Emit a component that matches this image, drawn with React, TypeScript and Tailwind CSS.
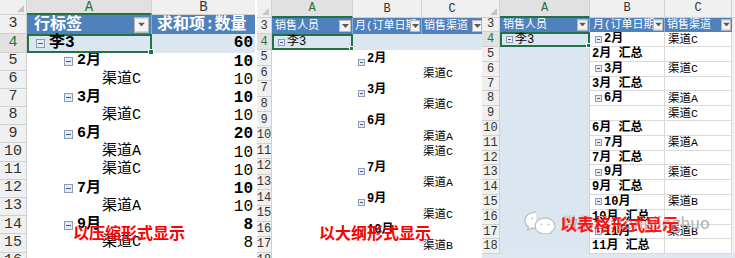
import React from "react";

const FONT = "font-['Liberation_Mono','Noto_Sans_CJK_SC',monospace]";

function Tog({ small }: { small?: boolean }) {
  if (small)
    return (
      <span className="inline-flex items-center justify-center w-[7px] h-[7px] border border-[#8c9cb8] bg-[#e6ecf5] mr-[2px] shrink-0">
        <span className="w-[3px] h-px bg-[#4a5a78]" />
      </span>
    );
  return (
    <span className="inline-flex items-center justify-center w-[9px] h-[9px] border border-[#8c9cb8] bg-[#e6ecf5] mr-[4px] shrink-0">
      <span className="w-[5px] h-px bg-[#4a5a78]" />
    </span>
  );
}

function Corner({ w, h }: { w: string; h: string }) {
  return (
    <div className={`${w} ${h} bg-[#f0f0f0] border-r border-b border-[#d0d0d0] flex items-end justify-end pr-[2px] pb-[2px] shrink-0`}>
      <svg width="7" height="7" viewBox="0 0 7 7">
        <polygon points="7,0 7,7 0,7" fill="#c4c4c4" />
      </svg>
    </div>
  );
}

function Drop({ cls }: { cls: string }) {
  return (
    <span className={`absolute top-1/2 -translate-y-1/2 ${cls} bg-[#f4f4f4] border border-[#b9b9b9] flex items-center justify-center`}>
      <svg width="7" height="4" viewBox="0 0 7 4">
        <polygon points="0,0 7,0 3.5,4" fill="#5a5a5a" />
      </svg>
    </span>
  );
}

/* ---------------- Panel 1: compact form ---------------- */
type P1Row = { n: number; a: string; lvl: number; tog?: boolean; bold?: boolean; v: string };
const p1rows: P1Row[] = [
  { n: 5, a: "2月", lvl: 1, tog: true, bold: true, v: "10" },
  { n: 6, a: "渠道C", lvl: 2, v: "10" },
  { n: 7, a: "3月", lvl: 1, tog: true, bold: true, v: "10" },
  { n: 8, a: "渠道C", lvl: 2, v: "10" },
  { n: 9, a: "6月", lvl: 1, tog: true, bold: true, v: "20" },
  { n: 10, a: "渠道A", lvl: 2, v: "10" },
  { n: 11, a: "渠道C", lvl: 2, v: "10" },
  { n: 12, a: "7月", lvl: 1, tog: true, bold: true, v: "10" },
  { n: 13, a: "渠道A", lvl: 2, v: "10" },
  { n: 14, a: "9月", lvl: 1, tog: true, bold: true, v: "8" },
  { n: 15, a: "渠道C", lvl: 2, v: "8" },
  { n: 16, a: "", lvl: 2, v: "" },
];

function P1RowHead({ n, sel }: { n: number; sel?: boolean }) {
  return (
    <div
      className={`w-[27px] shrink-0 border-r border-b border-[#d0d0d0] flex items-center justify-center text-[15px] ${
        sel ? "bg-[#e1e1e1] text-[#217346]" : "bg-[#f0f0f0] text-[#333]"
      }`}
    >
      {n}
    </div>
  );
}

function Panel1() {
  return (
    <div className={`w-[255px] shrink-0 flex flex-col ${FONT}`}>
      <div className="flex h-[15px]">
        <Corner w="w-[27px]" h="h-[15px]" />
        <div className="w-[125px] shrink-0 bg-[#e1e1e1] border-r border-[#d0d0d0] border-b-2 border-b-[#217346] text-[#217346] text-[14px] leading-[14px] flex justify-center">
          A
        </div>
        <div className="w-[103px] shrink-0 bg-[#f0f0f0] border-b border-[#d0d0d0] text-[#333] text-[14px] leading-[14px] flex justify-center">
          B
        </div>
      </div>
      <div className="flex h-[19px]">
        <P1RowHead n={3} />
        <div className="relative w-[125px] shrink-0 bg-[#4f81bd] border-r border-[#8eaedb] text-white font-bold text-[16px] flex items-center pl-[7px]">
          行标签
          <Drop cls="right-[2px] w-[15px] h-[15px]" />
        </div>
        <div className="w-[103px] shrink-0 bg-[#4f81bd] text-white font-bold text-[16px] flex items-center pl-[5px] whitespace-nowrap overflow-hidden">
          求和项:数量
        </div>
      </div>
      <div className="flex h-[18.5px]">
        <P1RowHead n={4} sel />
        <div className="relative w-[125px] shrink-0 bg-[#dce6f1] border-2 border-[#217346] flex items-center pl-[7px] font-bold text-[16px] text-black">
          <Tog />
          李3
          <span className="absolute -right-[4px] -bottom-[4px] w-[6px] h-[6px] bg-[#217346] border border-white" />
        </div>
        <div className="w-[103px] shrink-0 bg-[#dce6f1] flex items-center justify-end pr-[2px] font-bold text-[16px] text-black">
          60
        </div>
      </div>
      {p1rows.map((r) => (
        <div key={r.n} className="flex h-[18.2px]">
          <P1RowHead n={r.n} />
          <div
            className={`w-[125px] shrink-0 flex items-center text-[15px] text-black ${r.bold ? "font-bold" : ""} ${
              r.lvl === 1 ? "pl-[37px]" : "pl-[75px]"
            }`}
          >
            {r.tog && <Tog />}
            {r.a}
          </div>
          <div className={`w-[103px] shrink-0 flex items-center justify-end pr-[2px] text-[16px] text-black ${r.bold ? "font-bold" : ""}`}>
            {r.v}
          </div>
        </div>
      ))}
    </div>
  );
}

/* ---------------- Panel 2: outline form ---------------- */
type P2Row = { n: number; col: "b" | "c"; t: string };
const p2rows: P2Row[] = [
  { n: 5, col: "b", t: "2月" },
  { n: 6, col: "c", t: "渠道C" },
  { n: 7, col: "b", t: "3月" },
  { n: 8, col: "c", t: "渠道C" },
  { n: 9, col: "b", t: "6月" },
  { n: 10, col: "c", t: "渠道A" },
  { n: 11, col: "c", t: "渠道C" },
  { n: 12, col: "b", t: "7月" },
  { n: 13, col: "c", t: "渠道A" },
  { n: 14, col: "b", t: "9月" },
  { n: 15, col: "c", t: "渠道C" },
  { n: 16, col: "b", t: "10月" },
  { n: 17, col: "c", t: "渠道B" },
  { n: 18, col: "c", t: "" },
];

function SmallRowHead({ n, w, sel }: { n: number; w: string; sel?: boolean }) {
  return (
    <div
      className={`${w} shrink-0 border-r border-b border-[#d0d0d0] flex items-center justify-center text-[12px] ${
        sel ? "bg-[#e1e1e1] text-[#217346]" : "bg-[#f0f0f0] text-[#333]"
      }`}
    >
      {n}
    </div>
  );
}

function Panel2() {
  return (
    <div className={`w-[227px] shrink-0 flex flex-col pl-[2px] bg-white ${FONT}`}>
      <div className="flex h-[18px]">
        <Corner w="w-[15px]" h="h-[18px]" />
        <div className="w-[81px] shrink-0 bg-[#e1e1e1] border-r border-[#d0d0d0] border-b-2 border-b-[#217346] text-[#217346] text-[12px] flex items-center justify-center">
          A
        </div>
        <div className="w-[69px] shrink-0 bg-[#f0f0f0] border-r border-b border-[#d0d0d0] text-[#333] text-[12px] flex items-center justify-center">
          B
        </div>
        <div className="w-[60px] shrink-0 bg-[#f0f0f0] border-b border-[#d0d0d0] text-[#333] text-[12px] flex items-center justify-center">
          C
        </div>
      </div>
      <div className="flex h-[16px]">
        <SmallRowHead n={3} w="w-[15px]" />
        <div className="relative w-[81px] shrink-0 bg-[#4f81bd] border-r border-[#8eaedb] text-white text-[11px] flex items-center pl-[3px] whitespace-nowrap overflow-hidden">
          销售人员
          <Drop cls="right-[1px] w-[12px] h-[12px]" />
        </div>
        <div className="relative w-[69px] shrink-0 bg-[#4f81bd] border-r border-[#8eaedb] text-white text-[11px] flex items-center pl-[2px] whitespace-nowrap overflow-hidden">
          月(订单日期
          <Drop cls="right-[1px] w-[10px] h-[12px]" />
        </div>
        <div className="relative w-[60px] shrink-0 bg-[#4f81bd] text-white text-[11px] flex items-center pl-[2px] whitespace-nowrap overflow-hidden">
          销售渠道
          <Drop cls="right-0 w-[10px] h-[12px]" />
        </div>
      </div>
      <div className="flex h-[16px]">
        <SmallRowHead n={4} w="w-[15px]" sel />
        <div className="relative w-[81px] shrink-0 bg-[#dce6f1] border-2 border-[#217346] flex items-center pl-[4px] text-[12px] text-black">
          <Tog small />
          李3
          <span className="absolute -right-[3px] -bottom-[3px] w-[5px] h-[5px] bg-[#217346] border border-white" />
        </div>
        <div className="w-[129px] shrink-0 bg-[#dce6f1]" />
      </div>
      {p2rows.map((r) => (
        <div key={r.n} className="flex h-[15.6px]">
          <SmallRowHead n={r.n} w="w-[15px]" />
          <div className="w-[81px] shrink-0" />
          <div className="w-[69px] shrink-0 flex items-end pl-[5px] font-bold text-[12px] text-black leading-[14px]">
            {r.col === "b" && (
              <>
                <Tog small />
                {r.t}
              </>
            )}
          </div>
          <div className="w-[60px] shrink-0 flex items-end pl-[1px] text-[11.5px] text-black leading-[14px]">
            {r.col === "c" && r.t}
          </div>
        </div>
      ))}
    </div>
  );
}

/* ---------------- Panel 3: tabular form ---------------- */
type P3Row = { n: number; b?: string; tog?: boolean; c?: string };
const p3rows: P3Row[] = [
  { n: 5, b: "2月 汇总" },
  { n: 6, b: "3月", tog: true, c: "渠道C" },
  { n: 7, b: "3月 汇总" },
  { n: 8, b: "6月", tog: true, c: "渠道A" },
  { n: 9, c: "渠道C" },
  { n: 10, b: "6月 汇总" },
  { n: 11, b: "7月", tog: true, c: "渠道A" },
  { n: 12, b: "7月 汇总" },
  { n: 13, b: "9月", tog: true, c: "渠道C" },
  { n: 14, b: "9月 汇总" },
  { n: 15, b: "10月", tog: true, c: "渠道B" },
  { n: 16, b: "10月 汇总" },
  { n: 17, b: "11月", tog: true, c: "渠道B" },
  { n: 18, b: "11月 汇总" },
];

function Panel3() {
  return (
    <div className={`w-[253px] shrink-0 flex flex-col bg-[#dfe7f1] ${FONT}`}>
      <div className="flex h-[17.5px] bg-[#f0f0f0]">
        <Corner w="w-[18px]" h="h-[17.5px]" />
        <div className="w-[90px] shrink-0 bg-[#e1e1e1] border-r border-[#d0d0d0] border-b-2 border-b-[#217346] text-[#217346] text-[12px] flex items-center justify-center">
          A
        </div>
        <div className="w-[75px] shrink-0 border-r border-b border-[#d0d0d0] text-[#333] text-[12px] flex items-center justify-center">
          B
        </div>
        <div className="w-[67px] shrink-0 border-r border-b border-[#d0d0d0] text-[#333] text-[12px] flex items-center justify-center">
          C
        </div>
        <div className="w-[3px] shrink-0 border-b border-[#d0d0d0]" />
      </div>
      <div className="flex h-[14.8px] bg-white">
        <SmallRowHead n={3} w="w-[18px]" />
        <div className="relative w-[90px] shrink-0 bg-[#4f81bd] border-r border-[#8eaedb] text-white text-[11px] flex items-center pl-[3px] whitespace-nowrap overflow-hidden">
          销售人员
          <Drop cls="right-[1px] w-[11px] h-[11px]" />
        </div>
        <div className="relative w-[75px] shrink-0 bg-[#4f81bd] border-r border-[#8eaedb] text-white text-[11px] flex items-center pl-[3px] whitespace-nowrap overflow-hidden">
          月(订单日期
          <Drop cls="right-[1px] w-[10px] h-[11px]" />
        </div>
        <div className="relative w-[67px] shrink-0 bg-[#4f81bd] text-white text-[11px] flex items-center pl-[2px] whitespace-nowrap overflow-hidden">
          销售渠道
          <Drop cls="right-[1px] w-[10px] h-[11px]" />
        </div>
        <div className="w-[3px] shrink-0 bg-[#f0f0f0]" />
      </div>
      <div className="flex h-[14.8px] bg-white">
        <SmallRowHead n={4} w="w-[18px]" sel />
        <div className="relative w-[90px] shrink-0 bg-[#dce6f1] border-2 border-[#217346] flex items-center pl-[4px] text-[12px] text-black">
          <Tog small />
          李3
          <span className="absolute -right-[3px] -bottom-[3px] w-[5px] h-[5px] bg-[#217346] border border-white" />
        </div>
        <div className="w-[75px] shrink-0 border-r border-b border-[#d9d9d9] flex items-center pl-[5px] font-bold text-[12px] text-black">
          <Tog small />
          2月
        </div>
        <div className="w-[67px] shrink-0 border-r border-b border-[#d9d9d9] flex items-center pl-[3px] text-[11.5px] text-black">
          渠道C
        </div>
        <div className="w-[3px] shrink-0 bg-[#f0f0f0]" />
      </div>
      {p3rows.map((r) => (
        <div key={r.n} className="flex h-[14.8px] bg-white">
          <SmallRowHead n={r.n} w="w-[18px]" />
          <div className="w-[90px] shrink-0 bg-[#dce6f1] border-r border-[#c9d6e8]" />
          <div
            className={`w-[75px] shrink-0 border-r border-b border-[#d9d9d9] flex items-center font-bold text-[12px] text-black whitespace-nowrap ${
              r.tog ? "pl-[5px]" : "pl-[2px]"
            }`}
          >
            {r.tog && <Tog small />}
            {r.b}
          </div>
          <div className="w-[67px] shrink-0 border-r border-b border-[#d9d9d9] flex items-center pl-[3px] text-[11.5px] text-black">
            {r.c}
          </div>
          <div className="w-[3px] shrink-0 bg-[#f0f0f0]" />
        </div>
      ))}
    </div>
  );
}

function WeChat() {
  return (
    <svg width="34" height="24" viewBox="0 0 34 24" fill="none" stroke="#c4c4c4" strokeWidth="1.4">
      <path d="M13 2C6.5 2 2 6 2 10.5c0 2.6 1.4 4.8 3.6 6.3L4.6 20l3.8-2c1.4.5 2.9.7 4.6.7" fill="white" />
      <circle cx="9" cy="8.5" r="1" fill="#c4c4c4" stroke="none" />
      <circle cx="16" cy="8.5" r="1" fill="#c4c4c4" stroke="none" />
      <path d="M22 8c-6 0-10 3.8-10 8s4 8 10 8c1.3 0 2.5-.2 3.6-.6l3.2 1.6-.8-2.8c2.4-1.5 4-3.7 4-6.2 0-4.2-4-8-10-8z" fill="white" />
      <circle cx="18.5" cy="14.5" r="1" fill="#c4c4c4" stroke="none" />
      <circle cx="25.5" cy="14.5" r="1" fill="#c4c4c4" stroke="none" />
    </svg>
  );
}

export default function App() {
  return (
    <div className="relative w-[735px] h-[258px] overflow-hidden bg-white flex">
      <Panel1 />
      <Panel2 />
      <Panel3 />
      <div className="absolute left-[73px] top-[223px] text-[16px] leading-[18px] font-bold text-[#ff0000] font-['Noto_Sans_CJK_SC',sans-serif]">
        以压缩形式显示
      </div>
      <div className="absolute left-[319px] top-[223px] text-[16px] leading-[18px] font-bold text-[#ff0000] font-['Noto_Sans_CJK_SC',sans-serif]">
        以大纲形式显示
      </div>
      <div className="absolute left-[523px] top-[210px]">
        <WeChat />
      </div>
      <div className="absolute left-[562px] top-[212px] text-[16px] leading-[20px] text-[#b0b0b0] font-['Noto_Sans_CJK_SC',sans-serif] whitespace-nowrap">
        微信号: tongjinghuo
      </div>
      <div className="absolute left-[560px] top-[214px] text-[17px] leading-[19px] font-bold text-[#ff0000] opacity-90 font-['Noto_Sans_CJK_SC',sans-serif]">
        以表格形式显示
      </div>
    </div>
  );
}
